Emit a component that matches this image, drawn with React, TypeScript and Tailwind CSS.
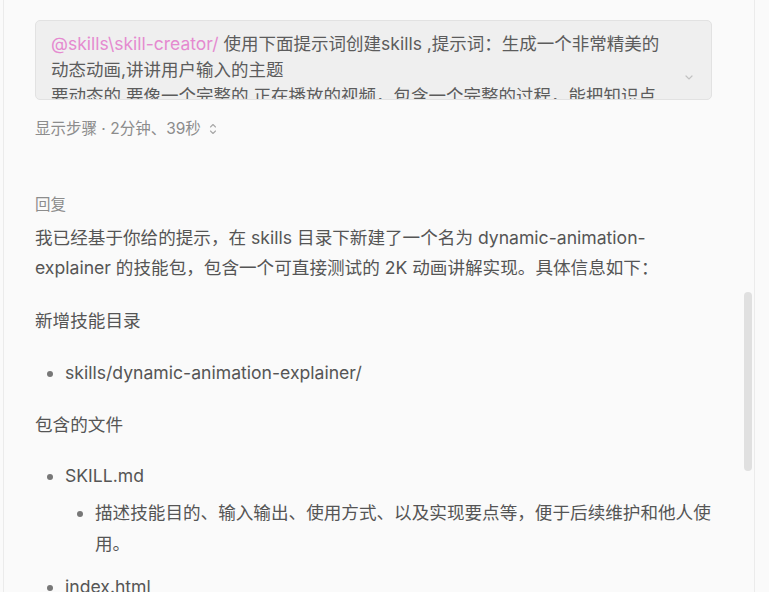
import React from "react";

const font = { fontFamily: "Inter, 'Noto Sans CJK SC', sans-serif" };

export default function App() {
  return (
    <div className="w-[769px] h-[592px] bg-[#fafafa] overflow-hidden" style={font}>
      <div className="relative ml-[3px] w-[752px] h-[592px] border-l border-r border-[#ebebeb] bg-[#fafafa] overflow-hidden">
        <div className="pl-[31px] pt-[20px] w-[708px]">
          {/* prompt box */}
          <div className="relative h-[80px] rounded-[5px] border border-[#e2e2e2] bg-[#efefef] overflow-hidden pl-[15px] pt-[10px]">
            <div className="text-[17.5px] leading-[26px] text-[#5c5c5c] whitespace-nowrap">
              <div>
                <span className="text-[#e58ad0]">@skills\skill-creator/</span> 使用下面提示词创建skills ,提示词：生成一个非常精美的
              </div>
              <div>动态动画,讲讲用户输入的主题</div>
              <div>要动态的,要像一个完整的,正在播放的视频，包含一个完整的过程，能把知识点</div>
            </div>
            <svg className="absolute left-[648px] top-[52px]" width="10" height="8" viewBox="0 0 10 8">
              <path d="M2 3 L5 6 L8 3" fill="none" stroke="#c2c2c2" strokeWidth="1.2" strokeLinecap="round" />
            </svg>
          </div>

          <div className="mt-[18px] flex items-center text-[15.5px] leading-[22px] text-[#8c8c8c]">
            <span>显示步骤 · 2分钟、39秒</span>
            <svg className="ml-[7px]" width="10" height="14" viewBox="0 0 10 14">
              <path d="M2.5 5 L5 2.5 L7.5 5 M2.5 9 L5 11.5 L7.5 9" fill="none" stroke="#a8a8a8" strokeWidth="1.1" strokeLinecap="round" strokeLinejoin="round" />
            </svg>
          </div>

          <div className="mt-[54px] text-[15.5px] leading-[22px] text-[#8c8c8c]">回复</div>

          <div className="mt-[7px] w-[676px] text-[17.6px] leading-[30px] text-[#555555]">
            <p>
              我已经基于你给的提示，在 skills 目录下新建了一个名为 dynamic-animation-explainer 的技能包，包含一个可直接测试的 2K 动画讲解实现。具体信息如下：
            </p>
            <p className="mt-[23px]">新增技能目录</p>
            <ul className="mt-[22px] pl-[30px] list-disc marker:text-[#777]">
              <li>skills/dynamic-animation-explainer/</li>
            </ul>
            <p className="mt-[22px]">包含的文件</p>
            <ul className="mt-[21px] pl-[30px] list-disc marker:text-[#777]">
              <li>
                SKILL.md
                <ul className="mt-[6px] pl-[30px] list-disc">
                  <li className="leading-[31px]">描述技能目的、输入输出、使用方式、以及实现要点等，便于后续维护和他人使用。</li>
                </ul>
              </li>
              <li className="mt-[13px]">index.html</li>
            </ul>
          </div>
        </div>

        <div className="absolute left-[740px] top-[292px] w-[8px] h-[179px] rounded-full bg-[#e0e0e0]" />
      </div>
    </div>
  );
}
